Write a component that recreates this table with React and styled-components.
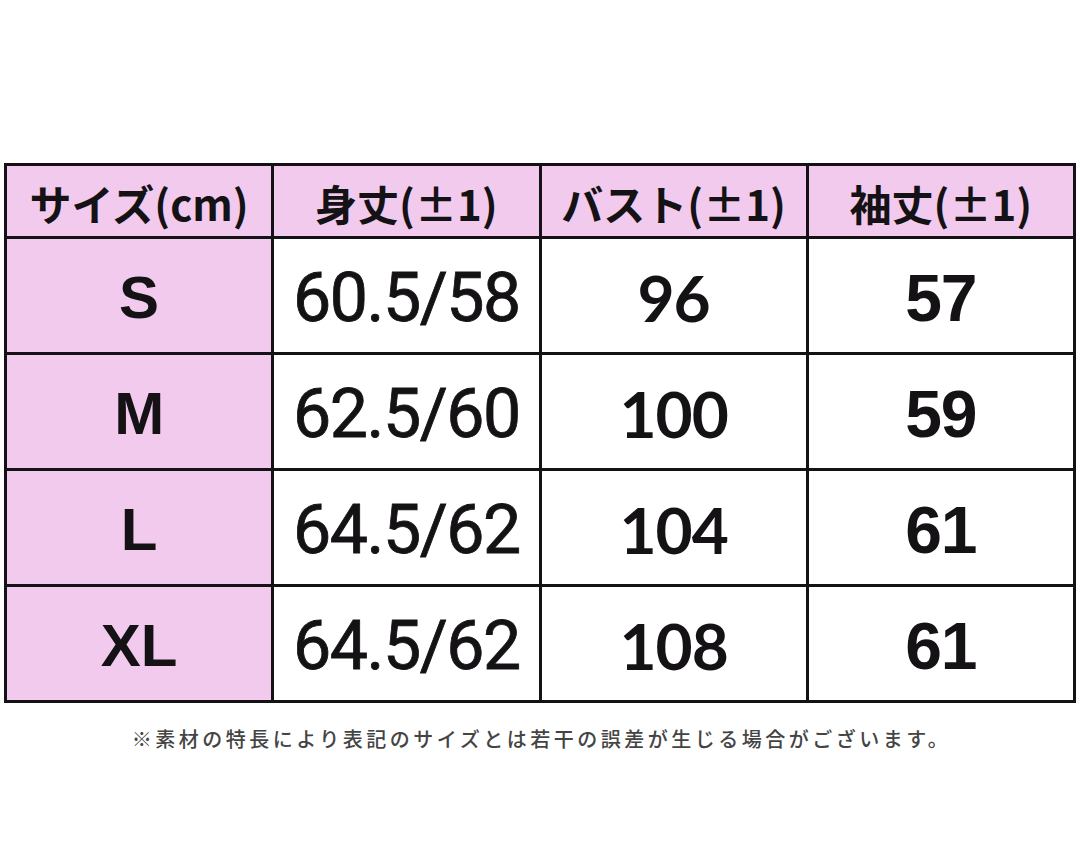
import styled, { createGlobalStyle } from 'styled-components';

const GlobalStyle = createGlobalStyle`
  html, body {
    margin: 0;
    padding: 0;
    background: #ffffff;
  }
  body {
    font-family: "Noto Sans CJK JP", "Noto Sans", sans-serif;
    color: #111;
  }
`;

const Page = styled.div`
  width: 1080px;
  height: 845px;
  padding-top: 163px;
  box-sizing: border-box;
  display: flex;
  flex-direction: column;
  align-items: center;
`;

const Table = styled.div`
  width: 1072px;
  display: grid;
  grid-template-columns: repeat(4, 1fr);
  grid-template-rows: 70px repeat(4, 113px);
  gap: 3px;
  padding: 3px;
  box-sizing: border-box;
  background: #141214;
`;

const Cell = styled.div`
  display: flex;
  align-items: center;
  justify-content: center;
  background: ${(p) => (p.pink ? '#f1caee' : '#ffffff')};
  color: #151215;
  white-space: nowrap;
`;

const HeadCell = styled(Cell)`
  font-family: "Noto Sans CJK JP", sans-serif;
  font-weight: 700;
  font-size: 42px;
  padding-top: 2px;
`;

const SizeCell = styled(Cell)`
  font-family: "Liberation Sans", Arial, sans-serif;
  font-weight: 700;
  font-size: 60px;
  padding-top: 4px;
`;

const fonts = {
  length: `font-family: Roboto, sans-serif; font-weight: 400; font-size: 68px; letter-spacing: -1.5px; -webkit-text-stroke: 0.8px #151215;`,
  bust: `font-family: Lato, sans-serif; font-weight: 700; font-size: 64px; letter-spacing: -1px;`,
  sleeve: `font-family: "Liberation Sans", Arial, sans-serif; font-weight: 700; font-size: 66px; letter-spacing: -1px;`,
};

const ValueCell = styled(Cell)`
  ${(p) => fonts[p.kind]}
  padding-top: 4px;
`;

const Note = styled.p`
  margin: 22px 0 0;
  padding-left: 3px;
  font-family: "Noto Sans CJK JP", sans-serif;
  font-weight: 500;
  font-size: 20px;
  letter-spacing: 3.5px;
  line-height: 28px;
  color: #444;
`;

const headers = ['サイズ(cm)', '身丈(±1)', 'バスト(±1)', '袖丈(±1)'];

const rows = [
  { size: 'S', length: '60.5/58', bust: '96', sleeve: '57' },
  { size: 'M', length: '62.5/60', bust: '100', sleeve: '59' },
  { size: 'L', length: '64.5/62', bust: '104', sleeve: '61' },
  { size: 'XL', length: '64.5/62', bust: '108', sleeve: '61' },
];

export default function App() {
  return (
    <>
      <GlobalStyle />
      <Page>
        <Table>
          {headers.map((h) => (
            <HeadCell pink key={h}>
              {h}
            </HeadCell>
          ))}
          {rows.map((r) => [
            <SizeCell pink key={r.size}>
              {r.size}
            </SizeCell>,
            <ValueCell kind='length' key={r.size + 'l'}>
              {r.length}
            </ValueCell>,
            <ValueCell kind='bust' key={r.size + 'b'}>
              {r.bust}
            </ValueCell>,
            <ValueCell kind='sleeve' key={r.size + 's'}>
              {r.sleeve}
            </ValueCell>,
          ])}
        </Table>
        <Note>※素材の特長により表記のサイズとは若干の誤差が生じる場合がございます。</Note>
      </Page>
    </>
  );
}
